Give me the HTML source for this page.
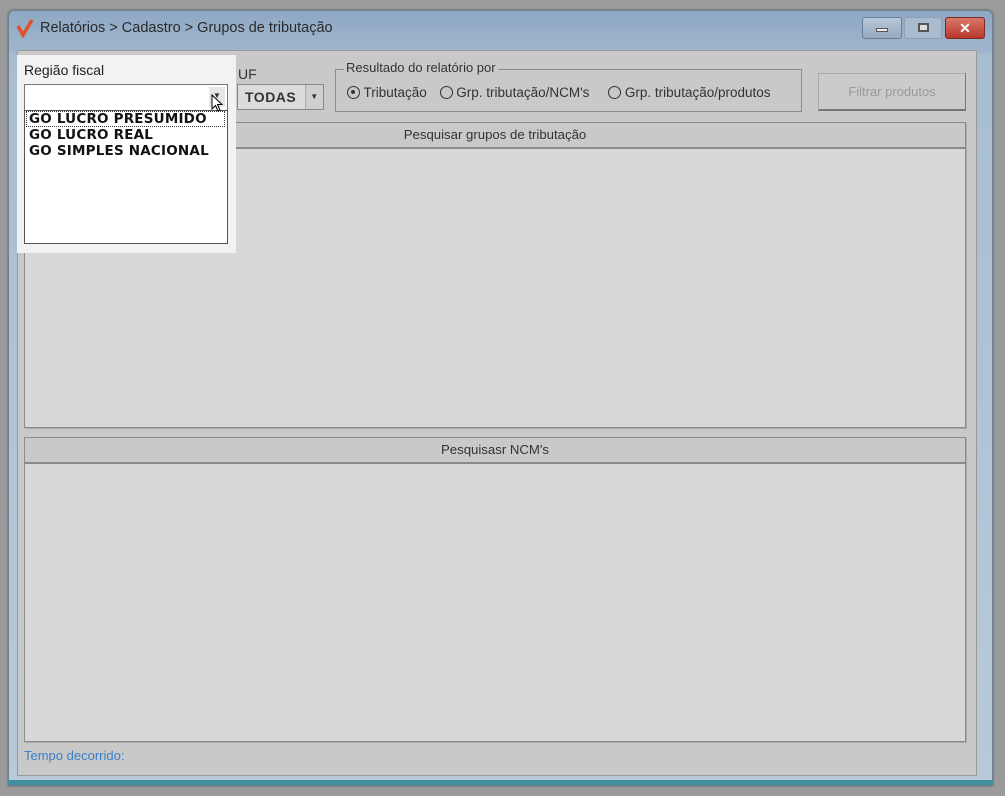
<!DOCTYPE html>
<html><head><meta charset="utf-8"><style>
*{box-sizing:border-box;margin:0;padding:0}
body{width:1005px;height:796px;background:#9b9b9b;position:relative;overflow:hidden;font-family:"Liberation Sans",sans-serif;font-size:12px;color:#333}
.abs{position:absolute}
#win{left:8px;top:10px;width:985px;height:776px;border:1px solid #6f7f8f;border-radius:6px 6px 0 0;background:linear-gradient(#8ea8c4,#9fb5cc 40px,#a9bdd1 45px,#b9c9d8);box-shadow:0 0 2px #555}
#winbot{left:8px;top:780px;width:985px;height:5px;background:#3f8fa0}
#client{left:17px;top:50px;width:960px;height:726px;background:#c9c9c9;border:1px solid #9a9a9a}
.title{left:40px;top:20px;font-size:14.5px;color:#2a2a2a}
.btn{top:17px;height:22px;border:1px solid #6a7f96;border-radius:3px;background:linear-gradient(#b9c8d8,#95a9be)}
.panel{background:#d8d8d8;border:1px solid #8a8a8a;box-shadow:1px 1px 0 #aaa}
.hdr{background:#c9c9c9;border-bottom:2px solid #8a8a8a;text-align:center;line-height:24px;font-size:13.2px;color:#333;height:26px}
.lst{font-family:"DejaVu Sans",sans-serif;font-weight:bold;font-size:13.5px;letter-spacing:.2px;color:#111;line-height:16px}
</style></head><body>
<div id="win" class="abs"></div>
<div id="winbot" class="abs"></div>
<svg class="abs" style="left:16px;top:18px" width="20" height="20"><path d="M2 8 L7 17 L16 2" stroke="#e0502a" stroke-width="3.5" fill="none"/></svg>
<div class="abs title">Relatórios &gt; Cadastro &gt; Grupos de tributação</div>
<div class="abs btn" style="left:862px;width:40px"><div class="abs" style="left:13px;top:10px;width:12px;height:4px;background:#eee;border:1px solid #555"></div></div>
<div class="abs btn" style="left:904px;width:38px;border-color:#8ea0b4;background:#a9bbce"><div class="abs" style="left:13px;top:5px;width:11px;height:9px;border:2px solid #555;background:#ddd"></div></div>
<div class="abs btn" style="left:945px;width:40px;background:linear-gradient(#d9786a,#b8382a);border-color:#7a2a20;color:#fff;font-weight:bold;text-align:center;line-height:20px;font-size:14px">✕</div>
<div id="client" class="abs"></div>
<div class="abs" style="left:238px;top:66px;font-size:14px">UF</div>
<div class="abs" style="left:237px;top:84px;width:87px;height:26px;border:1px solid #888;background:#dcdcdc;font-weight:bold;font-size:14px;line-height:24px;padding-left:7px;letter-spacing:.5px">TODAS<div class="abs" style="right:0;top:0;width:18px;height:24px;background:#cfcfcf;border-left:1px solid #aaa;text-align:center;font-size:8px;line-height:24px">▼</div></div>
<div class="abs" style="left:335px;top:69px;width:467px;height:43px;border:1px solid #8a8a8a"></div>
<div class="abs" style="left:344px;top:60px;background:#c9c9c9;padding:0 2px;font-size:13px">Resultado do relatório por</div>
<div class="abs" style="left:347px;top:85px;font-size:13.5px;white-space:nowrap">
<span style="display:inline-block;width:13px;height:13px;border:1.5px solid #333;border-radius:50%;vertical-align:-2px;position:relative"><span style="position:absolute;left:3px;top:3px;width:4px;height:4px;border-radius:50%;background:#333"></span></span> Tributação
<span style="display:inline-block;width:13px;height:13px;border:1.5px solid #333;border-radius:50%;vertical-align:-2px;margin-left:9px"></span> Grp. tributação/NCM's
<span style="display:inline-block;width:13px;height:13px;border:1.5px solid #333;border-radius:50%;vertical-align:-2px;margin-left:15px"></span> Grp. tributação/produtos</div>
<div class="abs" style="left:818px;top:73px;width:148px;height:38px;border:1px solid #aaa;border-right-color:#777;border-bottom:2px solid #777;background:#cbcbcb;color:#999;text-align:center;line-height:36px;font-size:13px">Filtrar produtos</div>
<div class="abs panel" style="left:24px;top:122px;width:942px;height:306px"><div class="hdr">Pesquisar grupos de tributação</div></div>
<div class="abs panel" style="left:24px;top:437px;width:942px;height:305px"><div class="hdr">Pesquisasr NCM's</div></div>
<div class="abs" style="left:24px;top:748px;color:#3a7fc8;font-size:13px">Tempo decorrido:</div>
<div class="abs" style="left:17px;top:55px;width:219px;height:198px;background:#f2f2f2"></div>
<div class="abs" style="left:24px;top:62px;font-size:14px;color:#222">Região fiscal</div>
<div class="abs" style="left:24px;top:84px;width:204px;height:27px;border:1px solid #777;background:#fff"><div class="abs" style="right:2px;top:2px;width:16px;height:20px;background:#e6e6e6;text-align:center;font-size:8px;line-height:18px">▼</div></div>
<div class="abs" style="left:24px;top:110px;width:204px;height:134px;border:1px solid #555;background:#fff"></div>
<div class="abs" style="left:26px;top:111px;width:199px;height:16px;border:1px dotted #333"></div>
<div class="abs lst" style="left:29px;top:111px">GO LUCRO PRESUMIDO<br>GO LUCRO REAL<br>GO SIMPLES NACIONAL</div>
<svg class="abs" style="left:211px;top:94px" width="14" height="20"><path d="M1 1 L1 15 L4.5 11.5 L7 17 L9 16 L6.5 10.5 L11 10.5 Z" fill="#fff" stroke="#000" stroke-width="1"/></svg>
</body></html>
